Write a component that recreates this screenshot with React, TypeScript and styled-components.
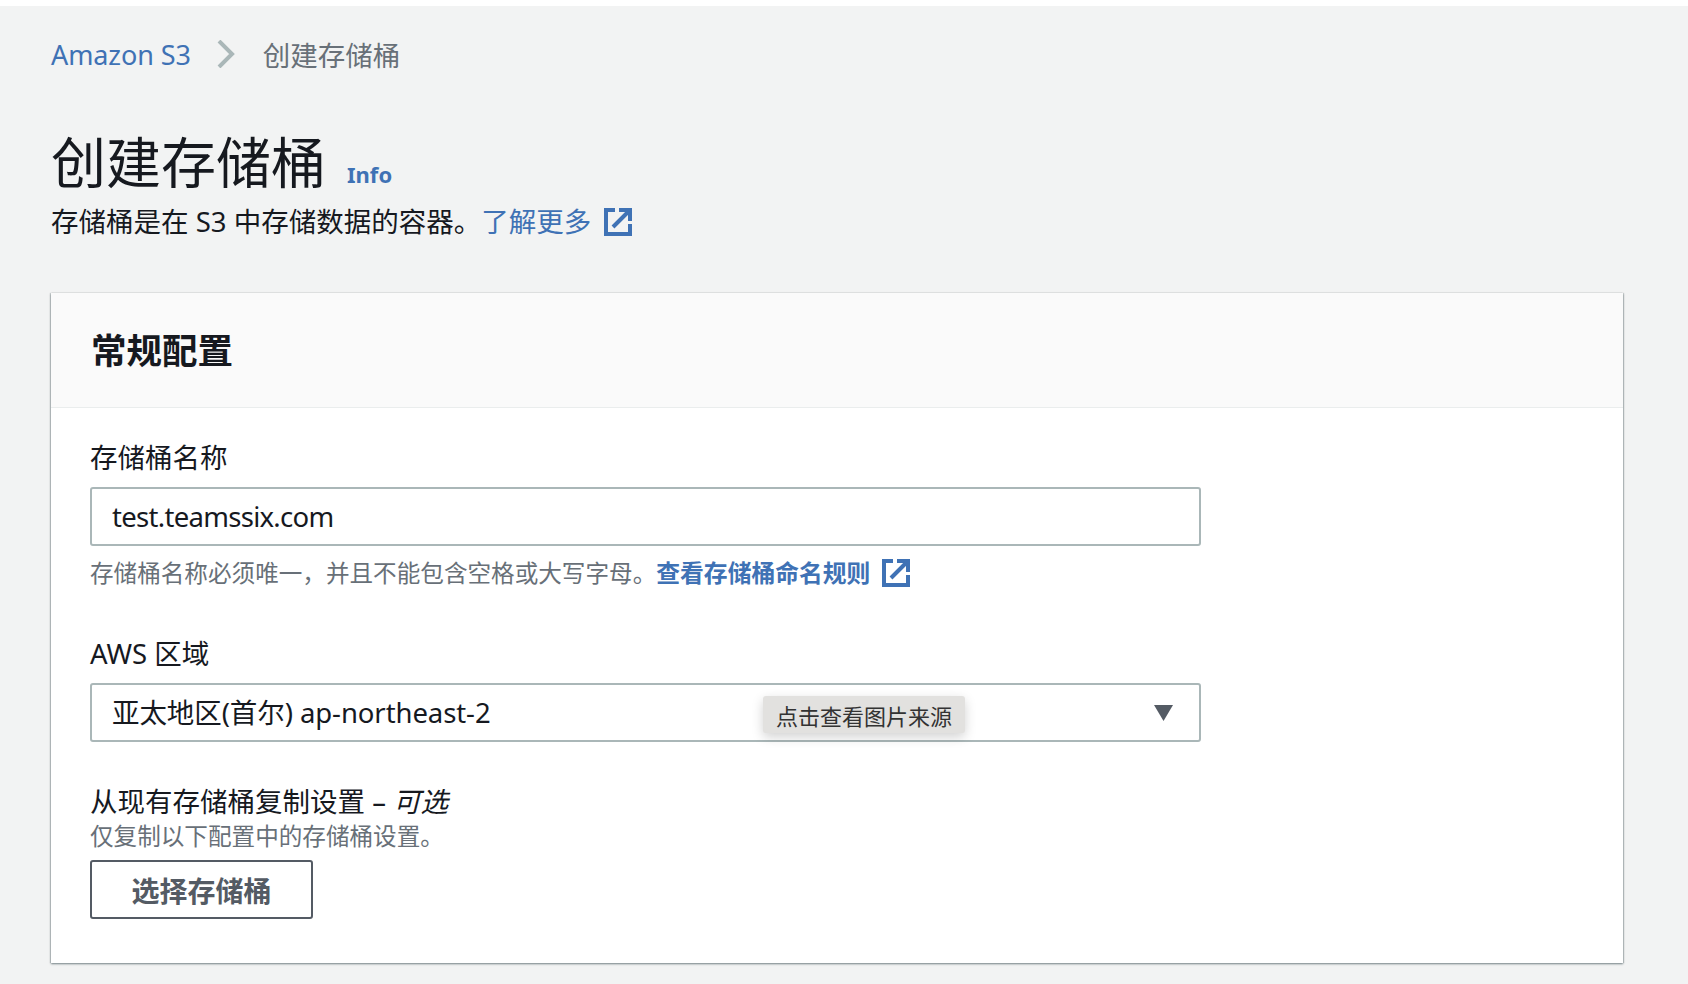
import React from "react";
import styled, { createGlobalStyle } from "styled-components";

const FONT = `"Noto Sans", "Noto Sans CJK SC", sans-serif`;

const GlobalStyle = createGlobalStyle`
  html, body {
    margin: 0;
    padding: 0;
    background: #ffffff;
    font-family: ${FONT};
  }
`;

/* ------------ page ------------ */

const Page = styled.div`
  margin-top: 6px;
  height: 978px;
  box-sizing: border-box;
  padding: 28px 65px 0 51px;
  background: #f2f3f3;
  overflow: hidden;
  color: #16191f;
`;

const Breadcrumb = styled.nav`
  display: flex;
  align-items: center;
  height: 40px;
  font-size: 27.5px;
`;

const CrumbLink = styled.a`
  color: #3f72b5;
  font-size: 27px;
  letter-spacing: -0.1px;
`;

const CrumbSep = styled.svg`
  width: 18px;
  height: 28px;
  margin: 0 28px 0 26px;
  fill: none;
  stroke: #aab7b8;
  stroke-width: 4;
`;

const CrumbCurrent = styled.span`
  color: #687078;
`;

const TitleRow = styled.div`
  display: flex;
  align-items: baseline;
  gap: 21px;
  margin-top: 53px;
  height: 70px;
`;

const Title = styled.h1`
  margin: 0;
  font-size: 55px;
  font-weight: 400;
  line-height: 70px;
`;

const InfoLink = styled.a`
  color: #3f72b5;
  font-size: 22px;
  font-weight: 700;
`;

const Description = styled.p`
  display: flex;
  align-items: center;
  margin: 7px 0 0;
  font-size: 27.5px;
  line-height: 36px;
  white-space: pre;
`;

const TextLink = styled.a<{ $bold?: boolean }>`
  display: inline-flex;
  align-items: center;
  color: #3f72b5;
  font-weight: ${(p) => (p.$bold ? 700 : 400)};
  font-size: ${(p) => (p.$bold ? "23.8px" : "inherit")};
`;

const ExternalIcon = styled.svg<{ $size: number; $gap: number }>`
  width: ${(p) => p.$size}px;
  height: ${(p) => p.$size}px;
  margin-left: ${(p) => p.$gap}px;
  fill: none;
  stroke: #3f72b5;
  stroke-width: 4;
`;

/* ------------ card ------------ */

const Card = styled.section`
  margin-top: 53px;
  background: #ffffff;
  box-shadow: 0 1px 2px rgba(0, 28, 36, 0.5), 1px 0 1px rgba(0, 28, 36, 0.15),
    -1px 0 1px rgba(0, 28, 36, 0.15);
`;

const CardHeader = styled.header`
  display: flex;
  align-items: center;
  height: 115px;
  box-sizing: border-box;
  padding: 0 40px;
  background: #fafafa;
  border-bottom: 1px solid #eaeded;
`;

const CardTitle = styled.h2`
  margin: 0;
  font-size: 35.5px;
  font-weight: 700;
  line-height: 48px;
`;

const CardBody = styled.div`
  padding: 32px 39px 44px;
`;

const Field = styled.div<{ $gap?: number }>`
  margin-top: ${(p) => p.$gap ?? 0}px;
`;

const Label = styled.div`
  font-size: 27.5px;
  line-height: 36px;
  em {
    font-style: italic;
  }
`;

const controlBox = `
  display: flex;
  align-items: center;
  width: 1111px;
  height: 59px;
  box-sizing: border-box;
  padding: 0 20px;
  background: #ffffff;
  border: 2px solid #aab7b8;
  border-radius: 3px;
  color: #16191f;
  font-family: ${FONT};
  font-size: 27.5px;
`;

const TextInput = styled.input`
  ${controlBox}
  display: block;
  margin-top: 11px;
  outline: none;
  letter-spacing: -0.7px;
`;

const SelectBox = styled.div`
  ${controlBox}
  position: relative;
  margin-top: 11px;
  justify-content: space-between;
  padding-right: 25px;
  padding-bottom: 3px;
  letter-spacing: -0.08px;
`;

const Caret = styled.svg`
  width: 21px;
  height: 18px;
  fill: #545b64;
  margin-top: 3px;
`;

const Tooltip = styled.div`
  position: absolute;
  left: 671px;
  top: 11px;
  display: flex;
  align-items: center;
  justify-content: center;
  width: 202px;
  height: 37px;
  background: #e2e1df;
  border-radius: 3px;
  color: #333333;
  font-size: 22px;
  letter-spacing: 0;
  box-shadow: 0 4px 12px rgba(0, 0, 0, 0.18);
`;

const Hint = styled.div<{ $gap?: number }>`
  display: flex;
  align-items: center;
  margin-top: ${(p) => p.$gap ?? 0}px;
  font-size: 23.6px;
  line-height: 32px;
  color: #687078;
`;

const OutlineButton = styled.button`
  display: block;
  width: 223px;
  height: 59px;
  margin-top: 8px;
  padding: 0;
  background: #ffffff;
  border: 2px solid #545b64;
  border-radius: 3px;
  color: #545b64;
  font-family: ${FONT};
  font-size: 28px;
  font-weight: 700;
`;

const External: React.FC<{ size: number; gap: number }> = ({ size, gap }) => (
  <ExternalIcon $size={size} $gap={gap} viewBox="0 0 28 28">
    <path d="M11 2H2v24h24v-10" />
    <path d="M15 2h11v11M26 2L9 19" />
  </ExternalIcon>
);

const App: React.FC = () => (
  <>
    <GlobalStyle />
    <Page>
      <Breadcrumb>
        <CrumbLink>Amazon S3</CrumbLink>
        <CrumbSep viewBox="0 0 18 28">
          <path d="M2 1l13 13L2 27" />
        </CrumbSep>
        <CrumbCurrent>创建存储桶</CrumbCurrent>
      </Breadcrumb>

      <TitleRow>
        <Title>创建存储桶</Title>
        <InfoLink>Info</InfoLink>
      </TitleRow>
      <Description>
        存储桶是在 S3 中存储数据的容器。
        <TextLink>
          了解更多
          <External size={28} gap={13} />
        </TextLink>
      </Description>

      <Card>
        <CardHeader>
          <CardTitle>常规配置</CardTitle>
        </CardHeader>
        <CardBody>
          <Field>
            <Label>存储桶名称</Label>
            <TextInput readOnly value="test.teamssix.com" />
            <Hint $gap={11}>
              存储桶名称必须唯一，并且不能包含空格或大写字母。
              <TextLink $bold>
                查看存储桶命名规则
                <External size={28} gap={12} />
              </TextLink>
            </Hint>
          </Field>

          <Field $gap={47}>
            <Label>AWS 区域</Label>
            <SelectBox>
              亚太地区(首尔) ap-northeast-2
              <Caret viewBox="0 0 21 18">
                <path d="M1 1h19L10.5 17z" />
              </Caret>
              <Tooltip>点击查看图片来源</Tooltip>
            </SelectBox>
          </Field>

          <Field $gap={42}>
            <Label>
              从现有存储桶复制设置 – <em>可选</em>
            </Label>
            <Hint>仅复制以下配置中的存储桶设置。</Hint>
            <OutlineButton>选择存储桶</OutlineButton>
          </Field>
        </CardBody>
      </Card>
    </Page>
  </>
);

export default App;
